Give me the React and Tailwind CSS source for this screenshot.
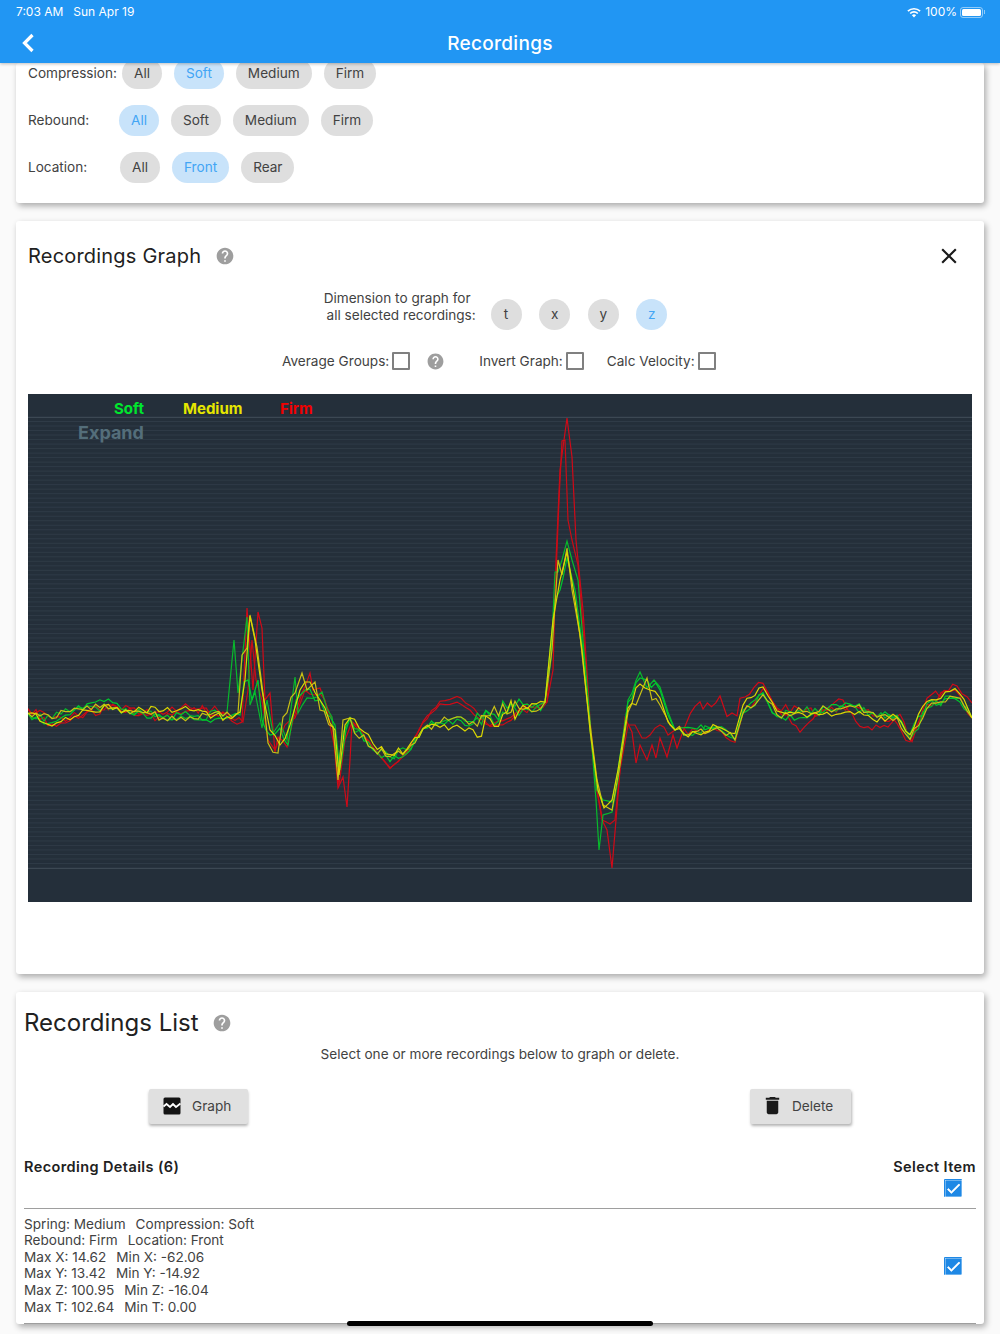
import React from 'react';
import { MdHelp, MdClose, MdDelete, MdCheck } from 'react-icons/md';

// seeded noise so the traces are the same on every load
const makeRand = (seed) => {
    let s = seed * 7919 + 12345;
    return () => {
        s = (s * 16807) % 2147483647;
        return (s / 2147483647) * 2 - 1;
    };
};

const noiseAmp = (x, smoothMid) => {
    if (x > 350 && x < 470) return smoothMid ? 1.5 : 4.5;
    if (x >= 470 && x < 526) return smoothMid ? 1.5 : 13;
    if (x > 545 && x < 625) return 0.6;
    return 4.5;
};

// slow drift so the six traces do not sit on top of each other
const drift = (x, seed) => {
    const calm = x < 232 || (x > 352 && x < 545) || x > 680;
    if (!calm) return 0;
    return Math.sin(x / 31 + seed) * 3.5 + Math.sin(x / 13 + seed * 2) * 2;
};

const buildTrace = (keys, seed, smoothMid) => {
    const rand = makeRand(seed);
    for (let i = 0; i < 10; i++) rand();
    const pts = [];
    for (let i = 0; i < keys.length - 1; i++) {
        const [x0, y0] = keys[i];
        const [x1, y1] = keys[i + 1];
        pts.push([x0, y0 + drift(x0, seed)]);
        const n = Math.floor((x1 - x0) / 4);
        const steep = Math.abs(y1 - y0) / Math.max(x1 - x0, 1) > 2.5;
        for (let j = 1; j < n; j++) {
            const x = x0 + ((x1 - x0) * j) / n;
            const y = y0 + ((y1 - y0) * j) / n;
            pts.push([x, y + drift(x, seed) + (steep ? 0 : rand() * noiseAmp(x, smoothMid))]);
        }
    }
    pts.push(keys[keys.length - 1]);
    return pts.map(([x, y]) => `${x.toFixed(1)},${y.toFixed(1)}`).join(' ');
};

const lead = [[28, 713], [52, 722], [70, 717], [87, 709], [117, 705], [143, 711], [163, 716], [190, 713], [227, 716]];
const midCalm = [[350, 718], [373, 745], [390, 757], [407, 752], [423, 730], [440, 724], [457, 720], [473, 726], [490, 718], [507, 712], [523, 705], [545, 702]];
const midRed = [[352, 722], [373, 750], [390, 770], [407, 755], [423, 725], [440, 705], [450, 703], [457, 699], [470, 705], [490, 722], [507, 718], [523, 708], [547, 702]];
const tail = [[777, 712], [803, 715], [827, 712], [850, 707], [873, 715], [897, 718], [910, 737], [927, 703], [950, 693], [960, 697], [972, 718]];
const tailRed = [[777, 712], [792, 725], [800, 733], [813, 720], [830, 708], [843, 700], [860, 723], [880, 722], [900, 712], [912, 742], [927, 700], [957, 687], [972, 703]];
const rightCalm = [[675, 730], [697, 730], [717, 727], [735, 738], [743, 710], [763, 690]];

const traces = [
    {
        color: '#d00a18',
        seed: 11,
        smooth: true,
        keys: [...lead, [242, 722], [247, 608], [253, 690], [258, 612], [262, 628], [265, 700], [270, 693], [275, 752], [278, 737], [287, 747], [293, 720], [302, 693], [310, 673], [313, 690], [320, 688], [332, 720], [338, 788], [343, 777], [347, 807], [350, 760], ...midRed, [553, 670], [556, 560], [560, 470], [564, 440], [567, 418], [572, 457], [576, 540], [583, 610], [590, 720], [597, 790], [603, 822], [607, 830], [612, 868], [616, 820], [620, 770], [625, 718], [632, 732], [636, 763], [640, 745], [647, 760], [652, 745], [656, 758], [660, 738], [667, 757], [673, 735], [677, 748], [695, 703], [700, 698], [703, 705], [720, 693], [727, 715], [737, 717], [740, 700], [745, 700], [763, 688], ...tailRed],
    },
    {
        color: '#c90c16',
        seed: 29,
        smooth: true,
        keys: [...lead, [243, 722], [248, 690], [252, 640], [256, 680], [262, 700], [268, 740], [275, 750], [285, 725], [295, 718], [305, 690], [315, 695], [325, 700], [335, 750], [339, 785], [345, 740], ...midRed, [555, 600], [559, 500], [562, 441], [565, 440], [568, 520], [572, 540], [578, 565], [584, 640], [590, 730], [596, 785], [602, 820], [610, 824], [615, 820], [620, 770], [628, 725], [635, 725], [642, 738], [650, 735], [660, 725], [668, 735], ...rightCalm, ...tail],
    },
    {
        color: '#08b92c',
        seed: 53,
        keys: [...lead, [234, 640], [238, 693], [247, 617], [250, 705], [255, 692], [262, 728], [267, 700], [273, 733], [280, 723], [287, 740], [295, 677], [298, 713], [307, 698], [317, 697], [322, 692], [332, 717], [338, 767], [343, 733], ...midCalm, [551, 660], [555, 572], [558, 572], [562, 560], [567, 541], [572, 560], [578, 580], [583, 640], [590, 720], [596, 800], [599, 850], [603, 815], [612, 812], [618, 780], [628, 700], [640, 672], [647, 688], [654, 680], [660, 687], [668, 712], ...rightCalm, ...tail],
    },
    {
        color: '#00c82e',
        seed: 71,
        keys: [...lead, [240, 715], [244, 682], [248, 680], [252, 700], [258, 680], [262, 720], [270, 735], [280, 728], [288, 745], [296, 700], [305, 690], [320, 700], [335, 725], [340, 770], [346, 730], ...midCalm, [555, 600], [560, 590], [563, 578], [567, 558], [575, 590], [583, 650], [590, 730], [597, 790], [603, 800], [612, 802], [618, 770], [628, 702], [640, 678], [647, 680], [660, 690], [668, 715], ...rightCalm, ...tail],
    },
    {
        color: '#c8c015',
        seed: 97,
        keys: [...lead, [238, 713], [242, 655], [247, 648], [250, 615], [257, 647], [263, 693], [268, 743], [278, 753], [283, 717], [295, 693], [302, 673], [307, 690], [315, 682], [320, 710], [333, 727], [338, 780], [343, 720], ...midCalm, [552, 650], [558, 560], [562, 575], [567, 548], [572, 590], [580, 635], [587, 700], [597, 780], [603, 805], [612, 810], [620, 765], [628, 712], [640, 695], [647, 678], [652, 700], [660, 705], [670, 725], ...rightCalm, ...tail],
    },
    {
        color: '#dcd800',
        seed: 131,
        keys: [...lead, [240, 712], [245, 680], [250, 616], [255, 640], [262, 690], [270, 730], [280, 745], [290, 725], [300, 690], [310, 682], [320, 700], [335, 730], [339, 775], [345, 725], ...midCalm, [553, 620], [560, 580], [567, 552], [575, 600], [582, 650], [590, 730], [598, 790], [604, 808], [612, 800], [618, 770], [628, 708], [640, 684], [650, 690], [660, 698], [668, 722], ...rightCalm, ...tail],
    },
].map((t) => ({ ...t, points: buildTrace(t.keys, t.seed, t.smooth) }));

const stripes = Array.from({ length: 101 }, (_, i) => 417 + i * 4.51);

const Chip = ({ label, active }) => (
    <div
        className={`h-[31px] flex items-center justify-center rounded-full px-[12px] text-[13.6px] ${
            active ? 'bg-[#c8e3fa] text-[#42a5f5]' : 'bg-[#dedede] text-[#424242]'
        }`}
    >
        {label}
    </div>
);

const FilterRow = ({ label, labelWidth, options, selected, className }) => (
    <div className={`flex items-center ${className}`}>
        <span className={`text-[13.6px] text-[#424242] ${labelWidth}`}>{label}</span>
        <div className="flex gap-3">
            {options.map((o) => (
                <Chip key={o} label={o} active={o === selected} />
            ))}
        </div>
    </div>
);

const Circle = ({ label, active }) => (
    <div
        className={`w-[31px] h-[31px] flex items-center justify-center rounded-full text-[13.6px] ${
            active ? 'bg-[#c8e3fa] text-[#42a5f5]' : 'bg-[#dedede] text-[#424242]'
        }`}
    >
        {label}
    </div>
);

const Box = () => <div className="w-[18px] h-[18px] border-2 border-[#808080] rounded-[1px] ml-[3px]" />;

const CheckedBox = () => (
    <div className="w-[18px] h-[18px] bg-[#1e88e5] rounded-[1px] flex items-center justify-center">
        <MdCheck size={17} stroke="white" strokeWidth={1} className="text-white" />
    </div>
);

const Card = ({ children, className }) => (
    <section className={`mx-4 bg-white rounded-[3px] shadow-[2px_3px_6px_rgba(0,0,0,0.32)] ${className}`}>
        {children}
    </section>
);

const WaveIcon = () => (
    <svg width="18" height="18" viewBox="0 0 18 18" className="mr-[11px]">
        <path d="M2 0.5h14a1.5 1.5 0 0 1 1.5 1.5v14a1.5 1.5 0 0 1-1.5 1.5H2A1.5 1.5 0 0 1 0.5 16V2A1.5 1.5 0 0 1 2 0.5z" fill="#141414" />
        <path d="M0.5 9.5l3-2.5 3.5 3 3-3 3 3 4.5-3.5" fill="none" stroke="#fff" strokeWidth="1.8" />
    </svg>
);

const DetailLine = ({ left, right }) => (
    <div>
        <span className="mr-[10px]">{left}</span>
        {right}
    </div>
);

const StatusBar = () => (
    <div className="h-[24px] flex items-center justify-between pl-4 pr-[15px] text-[12px] text-white">
        <div className="flex gap-[10px]">
            <span>7:03 AM</span>
            <span>Sun Apr 19</span>
        </div>
        <div className="flex items-center">
            <svg width="14" height="11" viewBox="0 0 14 11" className="mr-[4px]">
                <path d="M0.3 3.6a9.6 9.6 0 0 1 13.4 0l-1.2 1.2a7.9 7.9 0 0 0-11 0z" fill="#fff" />
                <path d="M2.6 5.9a6.3 6.3 0 0 1 8.8 0l-1.2 1.2a4.6 4.6 0 0 0-6.4 0z" fill="#fff" />
                <path d="M4.9 8.2a3 3 0 0 1 4.2 0L7 10.4z" fill="#fff" />
            </svg>
            <span className="mr-[3px]">100%</span>
            <div className="w-[23px] h-[11px] rounded-[3px] border border-white/50 p-[1px]">
                <div className="w-full h-full bg-white rounded-[1.5px]" />
            </div>
            <div className="w-[1px] h-[4px] bg-white/50 ml-[1px]" />
        </div>
    </div>
);

export default function App() {
    return (
        <div className="relative h-[1334px] overflow-hidden bg-[#fafafa] text-[#424242] [font-family:Inter,sans-serif]">
            <header className="relative z-10 h-[63px] bg-[#2196f3] shadow-[0_1px_3px_rgba(0,0,0,0.25)]">
                <StatusBar />
                <div className="relative h-[39px] flex items-center justify-center">
                    <svg width="14" height="20" viewBox="0 0 14 20" className="absolute left-[21px] top-[9px]">
                        <path d="M11.5 2L3.5 10l8 8" fill="none" stroke="#fff" strokeWidth="3.2" />
                    </svg>
                    <h1 className="mt-[1px] text-[19px] font-medium text-white tracking-[0.3px]">Recordings</h1>
                </div>
            </header>

            <main className="flex flex-col gap-[18px]">
                <Card className="px-3 pb-[20px]">
                    <FilterRow className="-mt-[5px]" label="Compression:" labelWidth="w-[94px]" options={['All', 'Soft', 'Medium', 'Firm']} selected="Soft" />
                    <FilterRow className="mt-4" label="Rebound:" labelWidth="w-[91px]" options={['All', 'Soft', 'Medium', 'Firm']} selected="All" />
                    <FilterRow className="mt-4" label="Location:" labelWidth="w-[92px]" options={['All', 'Front', 'Rear']} selected="Front" />
                </Card>

                <Card className="px-3 pb-[72px]">
                    <div className="flex items-center h-[70px] pr-[10px]">
                        <h2 className="text-[20px] text-[#212121] tracking-[0.2px]">Recordings Graph</h2>
                        <MdHelp size={20} className="ml-[14px] text-[#9e9e9e]" />
                        <MdClose size={26} className="ml-auto text-[#1a1a1a]" />
                    </div>

                    <div className="flex items-start justify-center -mt-[1px] text-[13.6px] leading-[17px] pr-[9px]">
                        <div className="text-center mr-[12px]">
                            <div className="pr-[8px]">Dimension to graph for</div>
                            <div>all selected recordings:</div>
                        </div>
                        <div className="flex gap-[17.6px] mt-[9px]">
                            <Circle label="t" />
                            <Circle label="x" />
                            <Circle label="y" />
                            <Circle label="z" active />
                        </div>
                    </div>

                    <div className="flex items-center h-[18px] mt-[22px] pl-[254px] text-[13.6px]">
                        <span>Average Groups:</span>
                        <Box />
                        <MdHelp size={19} className="ml-[16px] text-[#9e9e9e]" />
                        <span className="ml-[34px]">Invert Graph:</span>
                        <Box />
                        <span className="ml-[23px]">Calc Velocity:</span>
                        <Box />
                    </div>

                    <svg viewBox="28 394 944 508" className="block w-full h-[508px] mt-[24px]">
                        <rect x="28" y="394" width="944" height="508" fill="#242f3a" />
                        {stripes.map((y) => (
                            <line key={y} x1="28" x2="972" y1={y} y2={y} stroke="#2f3b47" strokeWidth="1" />
                        ))}
                        <line x1="28" x2="972" y1="417.5" y2="417.5" stroke="#3c4853" />
                        <line x1="28" x2="972" y1="868.5" y2="868.5" stroke="#3c4853" />
                        {traces.map((t) => (
                            <polyline key={t.seed} points={t.points} fill="none" stroke={t.color} strokeWidth="1.2" />
                        ))}
                        <text x="114" y="414" fontSize="15" fontWeight="700" fill="#00e62e">Soft</text>
                        <text x="183" y="414" fontSize="15" fontWeight="700" fill="#e6e600">Medium</text>
                        <text x="280" y="414" fontSize="15" fontWeight="700" fill="#f00000">Firm</text>
                        <text x="78" y="439" fontSize="18" fontWeight="700" fill="#546e7a">Expand</text>
                    </svg>
                </Card>

                <Card className="px-2 pt-[15px]">
                    <div className="flex items-center h-[32px]">
                        <h2 className="text-[24px] text-[#212121]">Recordings List</h2>
                        <MdHelp size={20} className="ml-[13px] text-[#9e9e9e]" />
                    </div>
                    <p className="mt-[5px] text-center text-[13.6px]">Select one or more recordings below to graph or delete.</p>

                    <div className="flex justify-between px-[125px] mt-[25px]">
                        <div className="w-[99px] h-[35px] flex items-center pl-[14px] pb-[2px] bg-[#e0e0e0] rounded-[2px] shadow-[0_2px_3px_rgba(0,0,0,0.3)] text-[13.6px]">
                            <WaveIcon />
                            Graph
                        </div>
                        <div className="w-[101px] h-[35px] flex items-center pl-[11px] pb-[2px] bg-[#e0e0e0] rounded-[2px] shadow-[1px_2px_3px_rgba(0,0,0,0.3)] text-[13.6px]">
                            <MdDelete size={23} className="mr-[8px] text-[#1a1a1a]" />
                            Delete
                        </div>
                    </div>

                    <div className="flex justify-between items-start mt-[33px] border-b border-[#9e9e9e] h-[52px] text-[14.5px] leading-[20px] font-semibold text-[#212121] tracking-[0.4px]">
                        <span>Recording Details (6)</span>
                        <div className="flex flex-col items-end">
                            <span>Select Item</span>
                            <div className="mt-[2px] mr-[14px]">
                                <CheckedBox />
                            </div>
                        </div>
                    </div>

                    <div className="flex items-center justify-between border-b border-[#9e9e9e] h-[115px] text-[13.6px] leading-[16.6px]">
                        <div className="pb-[2px]">
                            <DetailLine left="Spring: Medium" right="Compression: Soft" />
                            <DetailLine left="Rebound: Firm" right="Location: Front" />
                            <DetailLine left="Max X: 14.62" right="Min X: -62.06" />
                            <DetailLine left="Max Y: 13.42" right="Min Y: -14.92" />
                            <DetailLine left="Max Z: 100.95" right="Min Z: -16.04" />
                            <DetailLine left="Max T: 102.64" right="Min T: 0.00" />
                        </div>
                        <div className="mr-[14px]">
                            <CheckedBox />
                        </div>
                    </div>
                </Card>
            </main>

            <div className="absolute left-[347px] bottom-[8px] w-[306px] h-[5px] rounded-full bg-black" />
        </div>
    );
}
